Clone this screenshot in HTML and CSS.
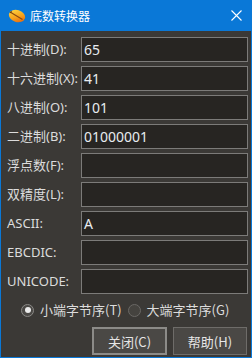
FILE: index.html
```html
<!DOCTYPE html>
<html>
<head>
<meta charset="utf-8">
<link rel="stylesheet" href="styles.css">
</head>
<body>
<div class="window">
  <div class="titlebar">
    <svg class="app-icon" width="18" height="14" viewBox="0 0 18 14">
      <defs>
        <linearGradient id="g" x1="0" y1="0" x2="1" y2="1">
          <stop offset="0" stop-color="#ffe14a"/>
          <stop offset="0.55" stop-color="#f7a21b"/>
          <stop offset="1" stop-color="#e0550e"/>
        </linearGradient>
      </defs>
      <ellipse cx="9" cy="7" rx="8.3" ry="6" fill="url(#g)" transform="rotate(18 9 7)"/>
      <path d="M2.5 3.2 L14.5 10.5" stroke="#8a4a10" stroke-width="1.1" fill="none"/>
      <path d="M2.2 3.8 L3.6 2.4" stroke="#6b3a0c" stroke-width="1.2"/>
    </svg>
    <span class="title">底数转换器</span>
    <svg class="close" width="11" height="11" viewBox="0 0 11 11">
      <path d="M0.5 0.5 L10.5 10.5 M10.5 0.5 L0.5 10.5" stroke="#ffffff" stroke-width="1.1"/>
    </svg>
  </div>
  <div class="content">
    <div class="fields">
      <label class="lbl">十进制(D):</label><div class="box">65</div>
      <label class="lbl">十六进制(X):</label><div class="box">41</div>
      <label class="lbl">八进制(O):</label><div class="box">101</div>
      <label class="lbl">二进制(B):</label><div class="box">01000001</div>
      <label class="lbl">浮点数(F):</label><div class="box"></div>
      <label class="lbl">双精度(L):</label><div class="box"></div>
      <label class="lbl">ASCII:</label><div class="box">A</div>
      <label class="lbl">EBCDIC:</label><div class="box"></div>
      <label class="lbl">UNICODE:</label><div class="box"></div>
    </div>
    <div class="radios">
      <div class="radio"><span class="dot checked"></span><span>小端字节序(T)</span></div>
      <div class="radio"><span class="dot"></span><span>大端字节序(G)</span></div>
    </div>
    <div class="buttons">
      <div class="btn default">关闭(C)</div>
      <div class="btn">帮助(H)</div>
    </div>
  </div>
</div>
</body>
</html>
```
FILE: styles.css
```css
html, body {
  margin: 0;
  padding: 0;
  background: #3b3936;
}
body {
  font-family: "Noto Sans", "Noto Sans CJK SC", sans-serif;
  color: #dedede;
}
.window {
  width: 252px;
  height: 358px;
  box-sizing: border-box;
  border: 1px solid #0a78d7;
  border-top: none;
  background: #3b3936;
  display: flex;
  flex-direction: column;
}
.titlebar {
  height: 31px;
  margin: 0 -1px;
  background: #0a78d7;
  display: flex;
  align-items: center;
  padding-left: 8px;
  color: #ffffff;
}
.app-icon {
  margin-right: 4px;
  margin-top: 1px;
}
.title {
  font-family: "Noto Sans CJK SC", sans-serif;
  font-size: 12px;
  line-height: 14px;
  flex: 1;
}
.close {
  margin-right: 10px;
}
.content {
  padding: 6px 3px 0 6px;
  display: flex;
  flex-direction: column;
}
.fields {
  display: grid;
  grid-template-columns: 74px 1fr;
  row-gap: 4px;
}
.lbl {
  font-family: "Noto Sans", "Noto Sans CJK SC", sans-serif;
  font-size: 13px;
  line-height: 25px;
  white-space: nowrap;
  color: #dcdcdc;
  height: 25px;
}
.box {
  height: 25px;
  box-sizing: border-box;
  border: 1px solid #7c7b79;
  background: #272522;
  color: #e8ecf0;
  font-family: "Noto Sans", sans-serif;
  font-size: 14px;
  line-height: 23px;
  padding-left: 2px;
}
.radios {
  margin-top: 6px;
  height: 20px;
  display: flex;
  align-items: center;
  padding-left: 14px;
  gap: 6px;
}
.radio {
  display: flex;
  align-items: center;
  gap: 6px;
  font-size: 13px;
  font-family: "Noto Sans CJK SC", sans-serif;
  line-height: 16px;
  color: #dcdcdc;
}
.dot {
  width: 13px;
  height: 13px;
  box-sizing: border-box;
  border-radius: 50%;
  border: 1px solid #6a6865;
  background: #45433f;
  position: relative;
}
.dot.checked {
  border-color: #8a8986;
  background: #4a4845;
}
.dot.checked::after {
  content: "";
  position: absolute;
  left: 2.5px;
  top: 2.5px;
  width: 6px;
  height: 6px;
  border-radius: 50%;
  background: #ececec;
}
.buttons {
  margin-top: 7px;
  display: flex;
  justify-content: flex-end;
  gap: 6px;
  padding-right: 1px;
}
.btn {
  width: 74px;
  height: 28px;
  box-sizing: border-box;
  border: 1px solid #6e6c69;
  background: #4a4845;
  color: #e6e6e6;
  font-family: "Noto Sans CJK SC", sans-serif;
  font-size: 13px;
  display: flex;
  align-items: center;
  justify-content: center;
}
.btn.default {
  width: 75px;
  border: 2px solid #8c8b88;
}
```
